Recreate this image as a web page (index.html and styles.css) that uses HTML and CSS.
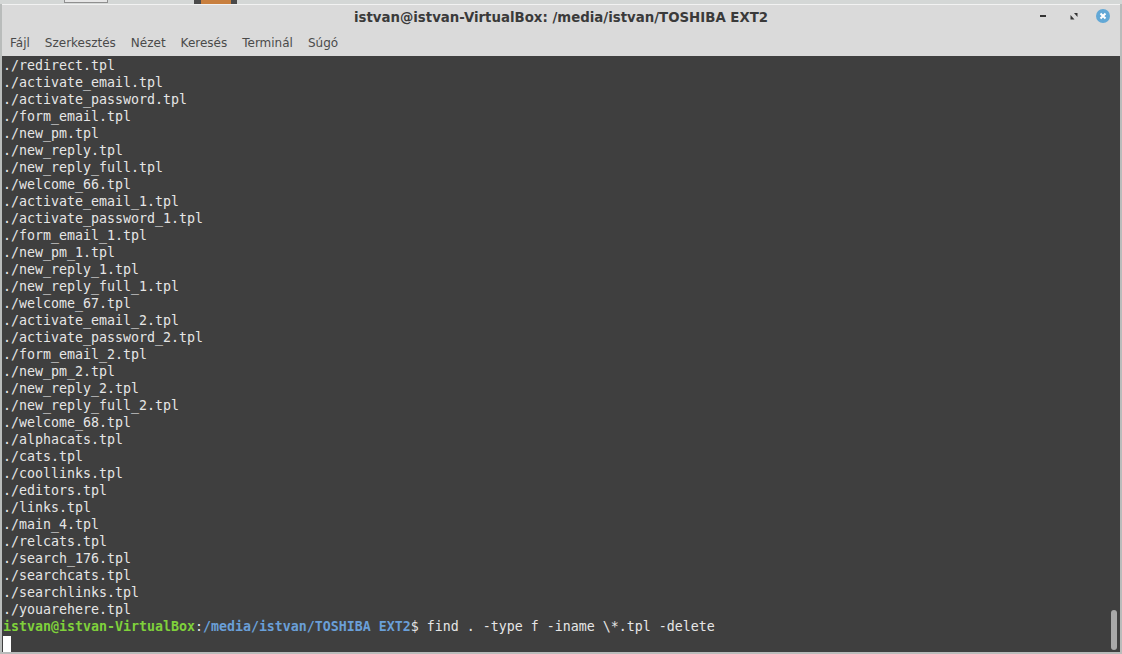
FILE: index.html
```html
<!DOCTYPE html>
<html lang="hu">
<head>
<meta charset="utf-8">
<title>istvan@istvan-VirtualBox: /media/istvan/TOSHIBA EXT2</title>
<link rel="stylesheet" href="styles.css">
</head>
<body>
<div class="desktop">
  <div class="desk-strip">
    <span class="desk-tab"></span>
    <span class="desk-icon"></span>
  </div>
  <div class="window">
    <header class="titlebar">
      <div class="title">istvan@istvan-VirtualBox: /media/istvan/TOSHIBA EXT2</div>
      <div class="controls">
        <svg class="ctl-min" width="16" height="16" viewBox="0 0 16 16"><rect x="5" y="7" width="6" height="2" fill="#333"/></svg>
        <svg class="ctl-max" width="16" height="16" viewBox="0 0 16 16"><path d="M8 5 H11.500 V9 Z M4.500 7 L8.500 11.500 H4.500 Z" fill="#333"/></svg>
        <svg class="close" width="16" height="16" viewBox="0 0 16 16"><circle cx="8" cy="8" r="7" fill="#62a8d6"/><path d="M5.500 5.500 L10.500 10.500 M10.500 5.500 L5.500 10.500" stroke="#fff" stroke-width="2"/></svg>
      </div>
    </header>
    <nav class="menubar">
      <span>Fájl</span><span>Szerkesztés</span><span>Nézet</span><span>Keresés</span><span>Terminál</span><span>Súgó</span>
    </nav>
    <main class="terminal">
<pre class="output">./redirect.tpl
./activate_email.tpl
./activate_password.tpl
./form_email.tpl
./new_pm.tpl
./new_reply.tpl
./new_reply_full.tpl
./welcome_66.tpl
./activate_email_1.tpl
./activate_password_1.tpl
./form_email_1.tpl
./new_pm_1.tpl
./new_reply_1.tpl
./new_reply_full_1.tpl
./welcome_67.tpl
./activate_email_2.tpl
./activate_password_2.tpl
./form_email_2.tpl
./new_pm_2.tpl
./new_reply_2.tpl
./new_reply_full_2.tpl
./welcome_68.tpl
./alphacats.tpl
./cats.tpl
./coollinks.tpl
./editors.tpl
./links.tpl
./main_4.tpl
./relcats.tpl
./search_176.tpl
./searchcats.tpl
./searchlinks.tpl
./youarehere.tpl
<b class="host">istvan@istvan-VirtualBox</b>:<b class="path">/media/istvan/TOSHIBA EXT2</b>$ find . -type f -iname \*.tpl -delete
<span class="cursor"> </span></pre>
      <div class="scrollbar"></div>
    </main>
  </div>
</div>
</body>
</html>
```
FILE: styles.css
```css
* { box-sizing: border-box; }
html, body { margin: 0; height: 100%; overflow: hidden; }
.desktop {
  width: 1122px;
  height: 654px;
  display: flex;
  flex-direction: column;
  background: #b9bcbb;
}
.desk-strip {
  height: 4px;
  flex: none;
  display: flex;
  background: #d4d7d6;
  padding-left: 64px;
}
.desk-tab {
  width: 44px;
  height: 3px;
  background: #e6e6e6;
  border: 1px solid #8f8f8f;
  border-top: 0;
}
.desk-icon {
  width: 43px;
  height: 4px;
  margin-left: 86px;
  background: #c87f3e;
  border-left: 7px solid #4a4a4a;
  border-right: 6px solid #4a4a4a;
}
.window {
  flex: 1;
  min-height: 0;
  margin: 0 2px 2px 2px;
  display: flex;
  flex-direction: column;
  background: #dadada;
  border-top: 1px solid #f2f2f2;
}
.titlebar {
  height: 25px;
  flex: none;
  position: relative;
  display: flex;
  align-items: center;
  justify-content: center;
}
.title {
  font: bold 13.33px "DejaVu Sans", sans-serif;
  color: #3a3a3a;
}
.controls {
  position: absolute;
  right: 9px;
  top: 3px;
  display: flex;
  align-items: center;
}
.ctl-max { margin-left: 15px; }
.close { margin-left: 13px; }
.menubar {
  height: 26px;
  flex: none;
  display: flex;
  align-items: center;
  gap: 15px;
  padding-left: 8px;
  font: 12px "DejaVu Sans", sans-serif;
  color: #4a4a4a;
}
.terminal {
  flex: 1;
  min-height: 0;
  position: relative;
  background: #3f3f3f;
  overflow: hidden;
}
.output {
  margin: 0;
  padding: 1px 0 0 1px;
  font: 13.29px/17px "DejaVu Sans Mono", monospace;
  color: #e6e6e6;
}
.host { font-weight: bold; color: #7fd13b; }
.path { font-weight: bold; color: #6a9fd8; }
.cursor { display: inline-block; width: 8px; height: 16px; background: #fff; vertical-align: top; margin-top: 1px; }
.scrollbar {
  position: absolute;
  right: 3px;
  bottom: 2px;
  width: 6px;
  height: 40px;
  border-radius: 3px;
  background: #a9a9a9;
}
```
